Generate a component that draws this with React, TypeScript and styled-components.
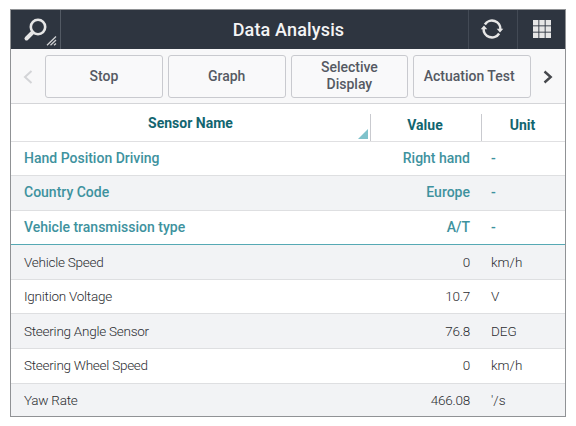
import React from 'react';
import styled, { createGlobalStyle } from 'styled-components';

const GlobalStyle = createGlobalStyle`
    * {
        box-sizing: border-box;
    }
    body {
        margin: 0;
        background: #ffffff;
        font-family: Roboto, 'Liberation Sans', sans-serif;
    }
`;

const Screen = styled.div`
    width: 576px;
    height: 426px;
    padding: 9px 10px 9px 10px;
    overflow: hidden;
`;

const Panel = styled.main`
    display: flex;
    flex-direction: column;
    width: 556px;
    height: 408px;
    border: 1px solid #909295;
    background: #ffffff;
`;

// Dark title bar
const TitleBar = styled.header`
    display: grid;
    grid-template-columns: 49px 1fr 49px 48px;
    flex: none;
    height: 39px;
    background: #2e3540;
    color: #f4f4f5;
`;

const BarCell = styled.div<{ $divider?: boolean }>`
    display: flex;
    align-items: center;
    justify-content: center;
    border-left: ${({ $divider }) => ($divider ? '1px solid #535a64' : 'none')};
`;

const ActionCell = styled(BarCell)`
    padding: 0 2px 1px 0;
    border-color: #434a55;

    &:last-child {
        padding-right: 0;
    }
`;

const Title = styled.h1`
    margin: 0;
    padding: 1px 0 0 48px;
    font-size: 18px;
    font-weight: 500;
    line-height: 22px;
    letter-spacing: 0.15px;
`;

// Row of function buttons with the paging arrows
const Toolbar = styled.nav`
    display: grid;
    grid-template-columns: 34px 1fr 34px;
    align-items: center;
    flex: none;
    height: 55px;
    border-bottom: 1px solid #d4d5d8;
    background: #f8f8f9;
`;

const ButtonGroup = styled.div`
    display: grid;
    grid-template-columns: repeat(4, 1fr);
    gap: 5px;
`;

const ToolButton = styled.button<{ $wide: boolean }>`
    height: 43px;
    padding: ${({ $wide }) => ($wide ? '0 9px 0 3px' : '0 4px')};
    border: 1px solid #c9cacf;
    border-radius: 3px;
    background: #f9f9fa;
    color: #555963;
    font-family: inherit;
    font-size: 14px;
    font-weight: 500;
    line-height: 17px;
    white-space: pre-line;
`;

const Arrow = styled.button`
    display: flex;
    align-items: center;
    justify-content: center;
    padding: 2px 0 0;
    border: 0;
    background: none;
`;

const columns = '359px 111px 1fr';

const TableHead = styled.div`
    display: grid;
    grid-template-columns: ${columns};
    flex: none;
    height: 38px;
    border-bottom: 1px solid #e0e0e2;
`;

const HeadCell = styled.div<{ $divider?: boolean }>`
    display: flex;
    align-items: center;
    justify-content: center;
    position: relative;
    margin-top: 10px;
    padding: ${({ $divider }) => ($divider ? '0 2px 6px 0' : '0 0 9px 0')};
    border-left: ${({ $divider }) => ($divider ? '1px solid #c9cacf' : 'none')};
    color: #126570;
    font-size: 14px;
    font-weight: 700;
`;

const SortMark = styled.span`
    position: absolute;
    right: 2px;
    bottom: 2px;
    border-left: 10px solid transparent;
    border-bottom: 10px solid #7fc2cb;
`;

// The last row runs under the bottom edge of the panel
const Rows = styled.div`
    display: grid;
    grid-auto-rows: 34.6px;
    flex: 1;
    min-height: 0;
    margin-top: -0.5px;
    overflow: hidden;
`;

const Row = styled.div<{ $pinned: boolean; $shaded: boolean; $last: boolean }>`
    display: grid;
    grid-template-columns: ${columns};
    align-items: center;
    padding-bottom: 1px;
    border-bottom: ${({ $last }) => ($last ? '1.5px solid #56a9b4' : '1px solid #dedfe1')};
    background: ${({ $shaded }) => ($shaded ? '#f2f3f5' : '#ffffff')};
    color: ${({ $pinned }) => ($pinned ? '#3e929e' : '#2b2d31')};
    font-size: ${({ $pinned }) => ($pinned ? 14 : 13.5)}px;
    font-weight: ${({ $pinned }) => ($pinned ? 500 : 300)};
    letter-spacing: ${({ $pinned }) => ($pinned ? 0 : -0.25)}px;
`;

const NameCell = styled.span`
    padding-left: 13px;
`;

const ValueCell = styled.span`
    padding-right: 11px;
    text-align: right;
`;

const UnitCell = styled.span`
    padding-left: 10px;
    letter-spacing: 0;
`;

const SearchIcon = () => (
    <svg width="49" height="39" viewBox="0 0 49 39" fill="none">
        <circle cx="27" cy="17" r="7.2" stroke="#e6e6e6" strokeWidth="2.6" />
        <path d="M21.5 22.5L15.5 28.5" stroke="#e6e6e6" strokeWidth="4" strokeLinecap="round" />
        <path d="M36 35.3L45 26.5M39.5 35.3L45 30M43 35.3L45 33.5" stroke="#cfd0d2" strokeWidth="1.3" />
    </svg>
);

const RefreshIcon = () => (
    <svg width="24" height="24" viewBox="0 0 24 24" fill="none">
        <path d="M4.9 7.5A8.4 8.4 0 0 1 20.4 12.5M19.1 16.5A8.4 8.4 0 0 1 3.6 11.5" stroke="#e6e6e6" strokeWidth="2.5" />
        <path d="M16.7 11.8H23.3L20 15.6ZM.7 12.2H7.3L4 8.4Z" fill="#e6e6e6" />
    </svg>
);

const AppsIcon = () => (
    <svg width="18" height="18" viewBox="0 0 18 18" fill="#e6e6e6">
        {[0, 6.3, 12.6].map((y) => [0, 6.3, 12.6].map((x) => <rect key={`${x}-${y}`} x={x} y={y} width="5.4" height="5.4" />))}
    </svg>
);

const ArrowIcon = ({ next }: { next?: boolean }) => (
    <svg width="12" height="14" viewBox="0 0 12 14" fill="none">
        <path
            d={next ? 'M2.5 1.5L8.7 7L2.5 12.5' : 'M9.5 1L3 7L9.5 13'}
            stroke={next ? '#46484d' : '#d3d4d7'}
            strokeWidth={next ? 2.4 : 2}
        />
    </svg>
);

interface Sensor {
    name: string;
    value: string;
    unit: string;
    pinned?: boolean;
}

const sensors: Sensor[] = [
    { name: 'Hand Position Driving', value: 'Right hand', unit: '-', pinned: true },
    { name: 'Country Code', value: 'Europe', unit: '-', pinned: true },
    { name: 'Vehicle transmission type', value: 'A/T', unit: '-', pinned: true },
    { name: 'Vehicle Speed', value: '0', unit: 'km/h' },
    { name: 'Ignition Voltage', value: '10.7', unit: 'V' },
    { name: 'Steering Angle Sensor', value: '76.8', unit: 'DEG' },
    { name: 'Steering Wheel Speed', value: '0', unit: 'km/h' },
    { name: 'Yaw Rate', value: '466.08', unit: "'/s" },
];

const actions = ['Stop', 'Graph', 'Selective\nDisplay', 'Actuation Test'];

const App: React.FC = () => (
    <>
        <GlobalStyle />
        <Screen>
            <Panel>
                <TitleBar>
                    <BarCell>
                        <SearchIcon />
                    </BarCell>
                    <BarCell $divider>
                        <Title>Data Analysis</Title>
                    </BarCell>
                    <ActionCell $divider>
                        <RefreshIcon />
                    </ActionCell>
                    <ActionCell $divider>
                        <AppsIcon />
                    </ActionCell>
                </TitleBar>
                <Toolbar>
                    <Arrow>
                        <ArrowIcon />
                    </Arrow>
                    <ButtonGroup>
                        {actions.map((label) => (
                            <ToolButton key={label} $wide={label.length > 12 && !label.includes('\n')}>
                                {label}
                            </ToolButton>
                        ))}
                    </ButtonGroup>
                    <Arrow>
                        <ArrowIcon next />
                    </Arrow>
                </Toolbar>
                <TableHead>
                    <HeadCell>
                        Sensor Name
                        <SortMark />
                    </HeadCell>
                    <HeadCell $divider>Value</HeadCell>
                    <HeadCell $divider>Unit</HeadCell>
                </TableHead>
                <Rows>
                    {sensors.map((sensor, i) => (
                        <Row
                            key={sensor.name}
                            $pinned={!!sensor.pinned}
                            $shaded={i % 2 === 1}
                            $last={!!sensor.pinned && !sensors[i + 1].pinned}
                        >
                            <NameCell>{sensor.name}</NameCell>
                            <ValueCell>{sensor.value}</ValueCell>
                            <UnitCell>{sensor.unit}</UnitCell>
                        </Row>
                    ))}
                </Rows>
            </Panel>
        </Screen>
    </>
);

export default App;
